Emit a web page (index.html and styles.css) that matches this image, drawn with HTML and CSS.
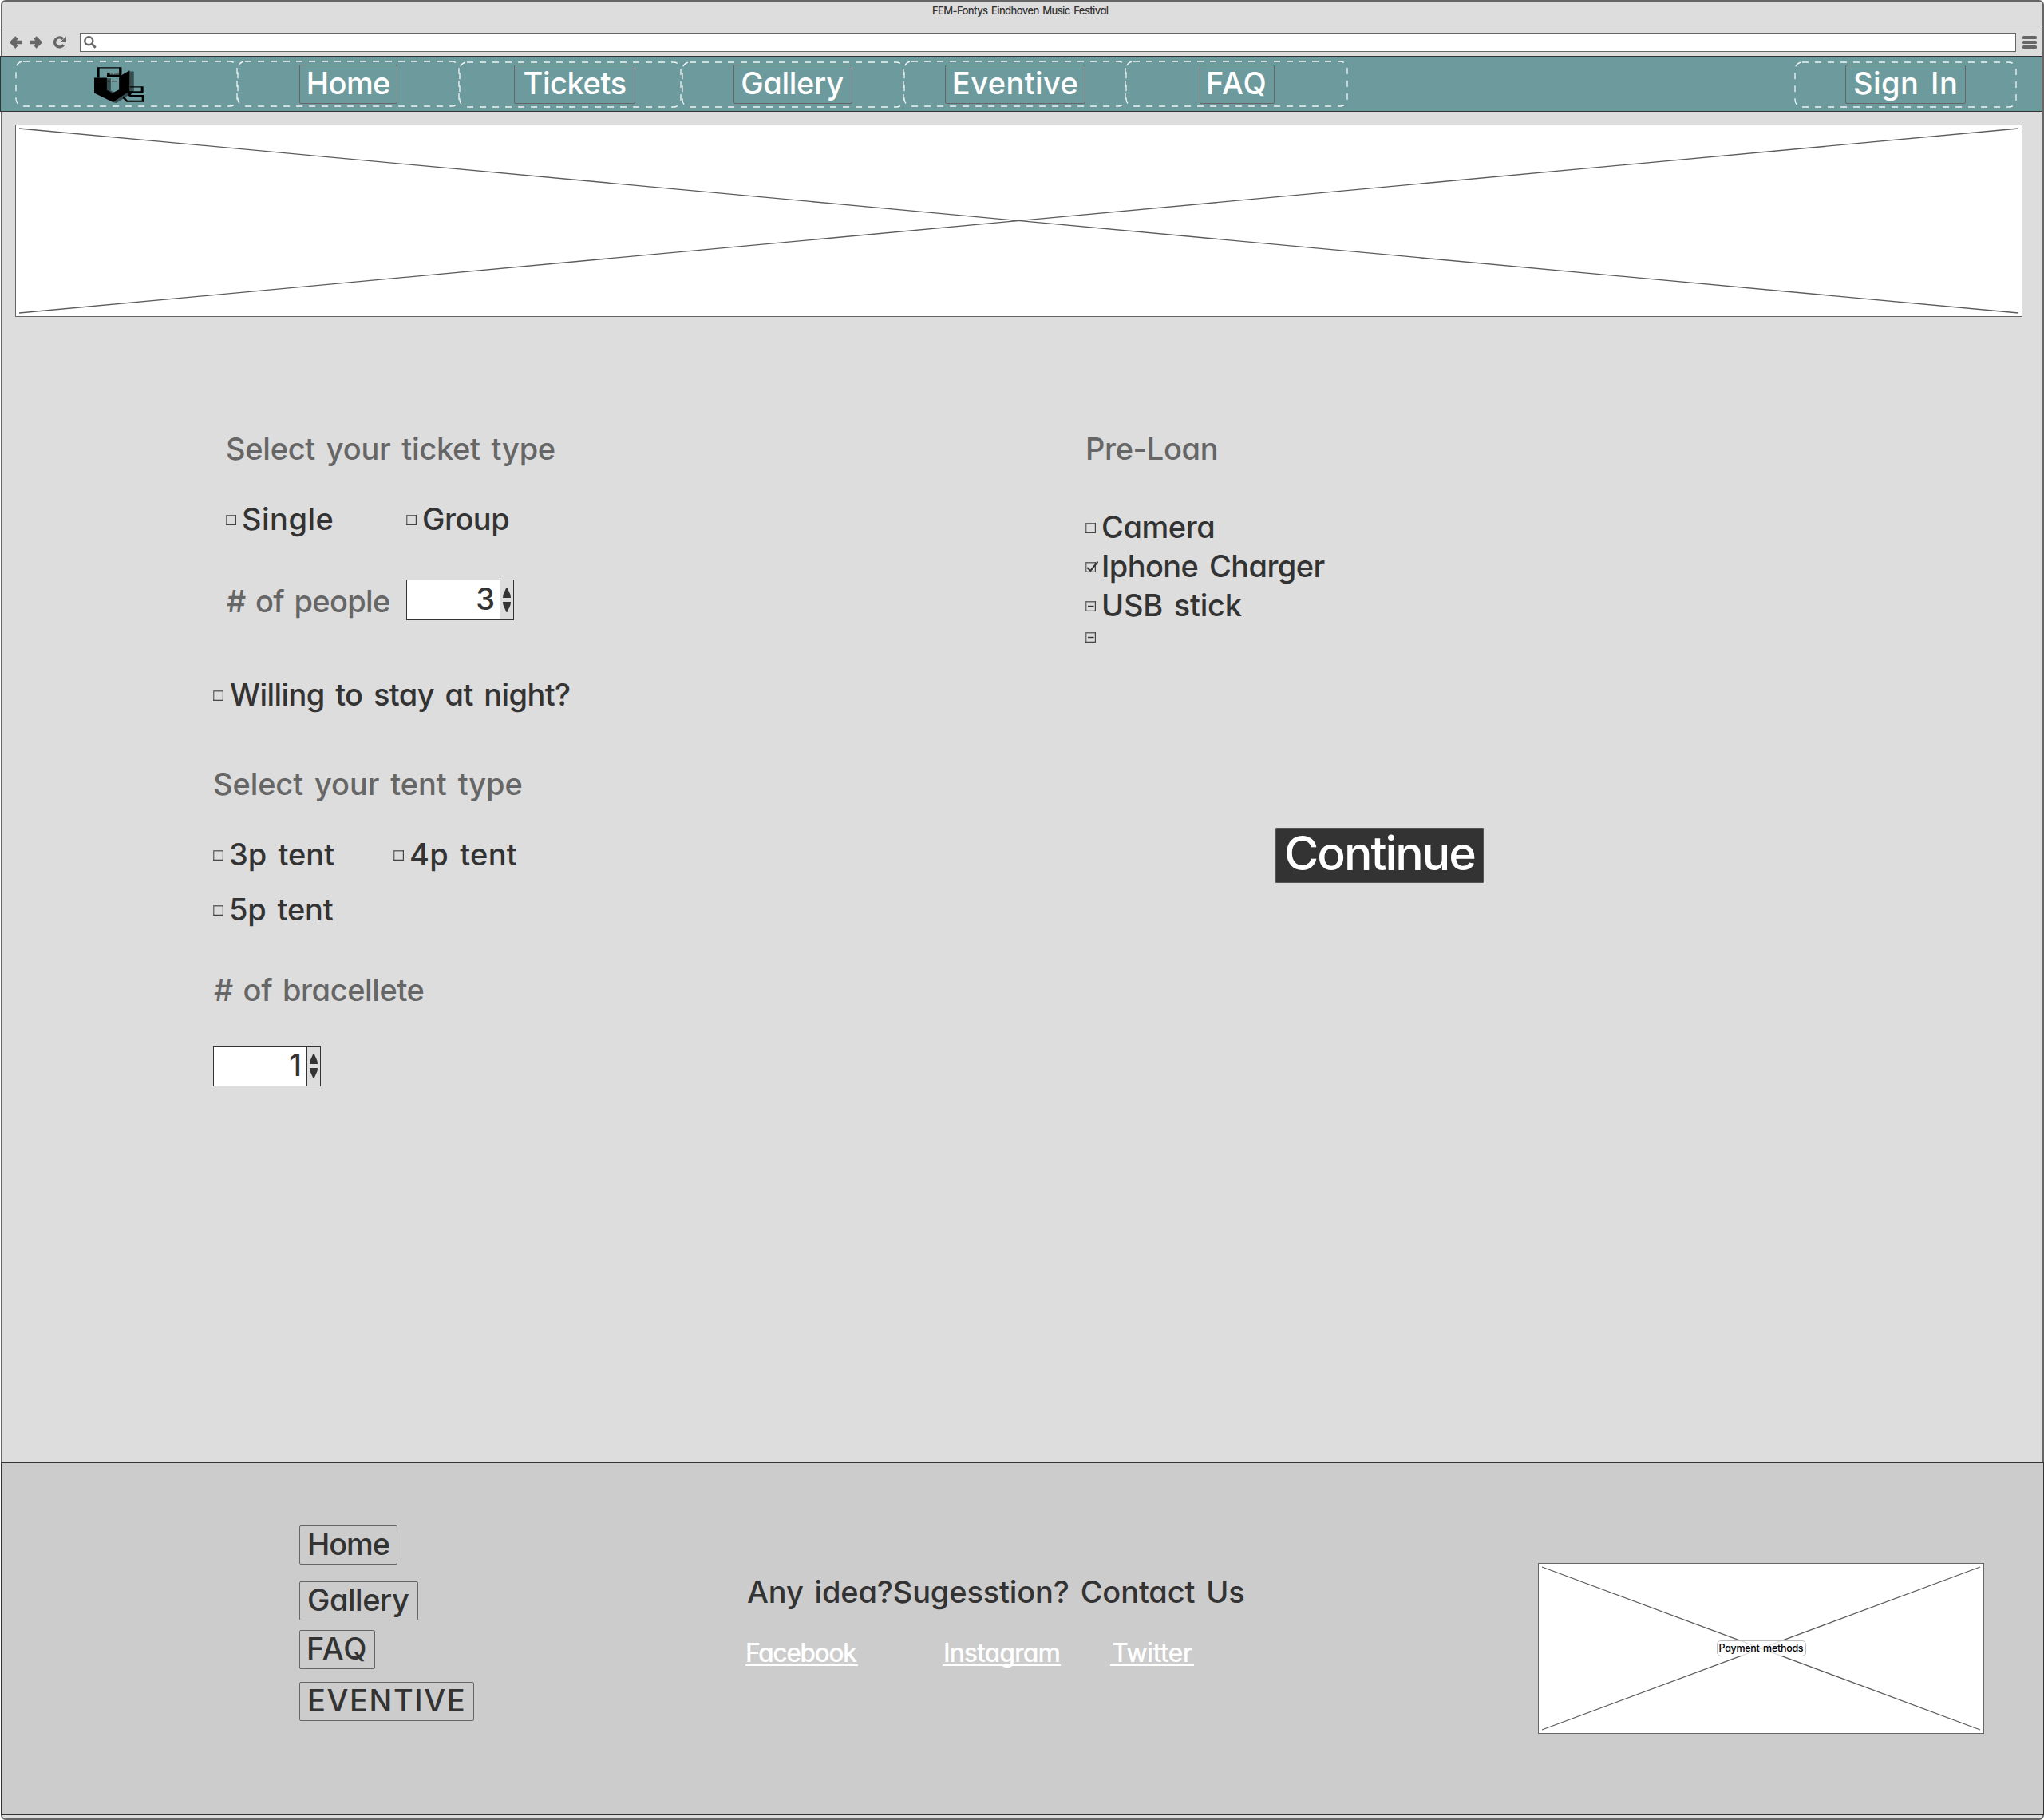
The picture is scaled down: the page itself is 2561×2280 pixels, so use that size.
FILE: index.html
```html
<!DOCTYPE html>
<html lang="en">
<head>
<meta charset="utf-8">
<title>FEM-Fontys Eindhoven Music Festival</title>
<link rel="stylesheet" href="styles.css">
</head>
<body>
<svg class="defs" width="0" height="0">
  <symbol id="slot" viewBox="0 0 279 58"><rect x="1" y="1" width="277" height="56" rx="9"/></symbol>
  <symbol id="box" viewBox="0 0 13 13">
    <path d="M.75 13V.75H12" fill="none" stroke="#666" stroke-width="1.3"/>
    <path d="M12.4 0V12.4H0" fill="none" stroke="#444" stroke-width="1.2"/>
  </symbol>
  <symbol id="spin" viewBox="0 0 16 49">
    <path d="M7.500 9h1l4 9 .5 4H3l.5-4zM3 27h10l-.5 4-4 9h-1l-4-9z" fill="#333"/>
  </symbol>
</svg>
<div class="window">
  <div class="titlebar"><span class="title">FEM-Fontys Eindhoven Music Festival</span></div>
  <div class="toolbar">
    <svg class="ico back" viewBox="0 0 16 16"><path d="M9 2 3 8l6 6M3.500 8H15.500" /></svg>
    <svg class="ico fwd" viewBox="0 0 16 16"><path d="M7 2l6 6-6 6M12.500 8H.5" /></svg>
    <svg class="ico reload" viewBox="0 0 16 16"><path d="M12.600 11.200A6 6 0 1 1 12 3.800"/><path class="solid" d="M16 .5V8H8.500z"/></svg>
    <div class="url"><svg class="search" viewBox="0 0 16 16"><circle cx="6.300" cy="6.300" r="5"/><path d="M10 10l4.700 4.700"/></svg></div>
    <svg class="menu" viewBox="0 0 18 16"><rect width="18" height="4" rx="1.500"/><rect y="6" width="18" height="4" rx="1.500"/><rect y="12" width="18" height="4" rx="1.500"/></svg>
  </div>

  <nav class="nav">
    <div class="slot">
      <svg class="dash"><use href="#slot"/></svg>
      <svg class="logo" viewBox="54 42 190 134">
        <path fill="#000" fill-opacity=".5" d="M102 84h15v46l12 6-6 8-21-14zM188 58h16v76l-66 43-14-3 64-42z"/>
        <path d="M54 82h48v46l21 11 25-13V80l10-9 30-17v78l-63 42-71-35z"/>
        <path d="M66 42h92v28h-10V46H74v36h-8zM103 63h10v7h43v7h-54zM116 63h9v3h-9zM130 63h18v3h-18zM102 93h14v3h-14zM120 93h22v3h-22z"/>
        <path d="M190 114h50v24h-42l-6 9h50v26h-66l-15-16 6-4 13 14h54v-14h-46l-8-6v-15h51v-14h-41z"/>
      </svg>
    </div>
    <div class="slot"><svg class="dash"><use href="#slot"/></svg><a class="link home">Home</a></div>
    <div class="slot low"><svg class="dash"><use href="#slot"/></svg><a class="link tickets">Tickets</a></div>
    <div class="slot low"><svg class="dash"><use href="#slot"/></svg><a class="link gallery">Gallery</a></div>
    <div class="slot"><svg class="dash"><use href="#slot"/></svg><a class="link eventive">Eventive</a></div>
    <div class="slot"><svg class="dash"><use href="#slot"/></svg><a class="link faq">FAQ</a></div>
    <div class="slot low signin"><svg class="dash"><use href="#slot"/></svg><a class="link sign">Sign In</a></div>
  </nav>

  <main class="main">
    <svg class="banner" viewBox="0 0 2515 241"><rect x=".5" y=".5" width="2514" height="240"/><path d="M5 5 2510 236M5 236 2510 5"/></svg>
    <div class="columns">
      <section class="tickets-form">
        <h2 class="heading ticket-heading">Select your ticket type</h2>
        <div class="row ticket-row">
          <label class="option"><svg class="check"><use href="#box"/></svg><span class="t-single">Single</span></label>
          <label class="option"><svg class="check"><use href="#box"/></svg><span class="t-group">Group</span></label>
        </div>
        <div class="row people-row">
          <span class="people-label"># of people</span>
          <div class="stepper"><span class="value">3</span><svg class="arrows"><use href="#spin"/></svg></div>
        </div>
        <div class="row night-row">
          <label class="option"><svg class="check"><use href="#box"/></svg><span class="t-night">Willing to stay at night?</span></label>
        </div>
        <h2 class="heading tent-heading">Select your tent type</h2>
        <div class="row tent-row">
          <label class="option"><svg class="check"><use href="#box"/></svg><span class="t-3p">3p tent</span></label>
          <label class="option"><svg class="check"><use href="#box"/></svg><span class="t-4p">4p tent</span></label>
        </div>
        <div class="row tent-row2">
          <label class="option"><svg class="check"><use href="#box"/></svg><span class="t-5p">5p tent</span></label>
        </div>
        <h2 class="heading bracelet-heading"># of bracellete</h2>
        <div class="stepper bracelet"><span class="value">1</span><svg class="arrows"><use href="#spin"/></svg></div>
      </section>
      <section class="loan-form">
        <h2 class="heading loan-heading">Pre-Loan</h2>
        <div class="loans">
          <label class="option"><svg class="check"><use href="#box"/></svg><span class="t-camera">Camera</span></label>
          <label class="option"><svg class="check"><use href="#box"/><path class="mark" d="M2.700 7.500 6.300 11 15 .3"/></svg><span class="t-iphone">Iphone Charger</span></label>
          <label class="option"><svg class="check"><use href="#box"/><path class="minus" d="M3 6.500H10.500"/></svg><span class="t-usb">USB stick</span></label>
          <label class="option empty"><svg class="check"><use href="#box"/><path class="minus" d="M3 6.500H10.500"/></svg></label>
        </div>
        <button class="continue">Continue</button>
      </section>
    </div>
  </main>

  <footer class="footer">
    <div class="foot-links">
      <a class="link f-home">Home</a>
      <a class="link f-gallery">Gallery</a>
      <a class="link f-faq">FAQ</a>
      <a class="link f-eventive">EVENTIVE</a>
    </div>
    <div class="contact">
      <p class="ask">Any idea?Sugesstion? Contact Us</p>
      <div class="social"><a class="facebook">Facebook</a><a class="instagram">Instagram</a><a class="twitter">Twitter</a></div>
    </div>
    <div class="payment">
      <svg class="cross" viewBox="0 0 559 214"><rect x=".5" y=".5" width="558" height="213"/><path d="M5 5 554 209M5 209 554 5"/></svg>
      <span class="caption">Payment methods</span>
    </div>
  </footer>
</div>
</body>
</html>
```
FILE: styles.css
```css
* { box-sizing: border-box; }

body {
  margin: 0;
  background: #fff;
  color: #333;
  font-family: Inter, "Open Sans", sans-serif;
  font-size: 38px;
  font-weight: 500;
  font-feature-settings: "cv11";
  line-height: 48px;
  word-spacing: 4px;
  white-space: nowrap;
}

svg { display: block; flex: none; }
.defs { position: absolute; }

.window {
  width: 2560px;
  height: 2280px;
  margin-left: 1px;
  border: 2px solid #666;
  border-radius: 6px;
  background: #ddd;
  display: flex;
  flex-direction: column;
}

/* Browser chrome */
.titlebar {
  height: 31px;
  border-bottom: 1px solid #666;
  padding-left: 1165px;
  font-size: 13px;
  line-height: 22px;
  letter-spacing: -.6px;
  word-spacing: 1.7px;
}
.toolbar {
  height: 37px;
  display: flex;
  align-items: flex-start;
  padding: 8px 0 0 9px;
}
.ico { width: 16px; height: 16px; margin-top: 4px; fill: none; stroke: #666; stroke-width: 4.6; }
.ico .solid { fill: #666; stroke: none; }
.fwd { margin-left: 9px; }
.reload { margin-left: 14px; stroke-width: 3.4; }
.url {
  width: 2426px;
  height: 24px;
  margin-left: 17px;
  border: 1px solid #666;
  background: #fff;
  padding: 3px 4px;
}
.search { width: 16px; height: 16px; fill: none; stroke: #666; stroke-width: 2.4; }
.search path { stroke-width: 3; }
.menu { width: 18px; height: 16px; margin: 4px 0 0 8px; fill: #666; }

/* Navigation */
.nav {
  width: 2559px;
  height: 70px;
  flex: none;
  margin-left: -3px;
  border: 1px solid #333;
  background: #6d9a9d;
  color: #fff;
  display: flex;
  padding: 5px 0 0 18px;
  position: relative;
}
.slot {
  width: 278.2px;
  height: 58px;
  display: flex;
  justify-content: center;
  padding-top: 5px;
  position: relative;
}
.dash {
  position: absolute;
  left: 0;
  top: -.5px;
  width: 279px;
  height: 58px;
  fill: none;
  stroke: #f2f5f5;
  stroke-width: 1.3;
  stroke-dasharray: 8 8;
}
.low .dash { top: .5px; }
.signin { margin-left: auto; margin-right: 32px; }
.logo { width: 63px; height: 45px; margin: 3px 17px 0 0; }

.link {
  display: block;
  height: 49px;
  border: 1px solid #666;
  border-radius: 2px;
  line-height: 44px;
  padding-left: 8px;
}
.home { width: 123px; letter-spacing: -.57px; }
.tickets { width: 152px; margin-left: 12px; padding-left: 10px; letter-spacing: -.4px; }
.gallery { width: 149px; margin-left: 2px; letter-spacing: -.28px; }
.eventive { width: 176px; margin-left: 2px; letter-spacing: .42px; }
.faq { width: 94px; margin-left: 2px; padding-left: 7px; letter-spacing: 1px; }
.sign { width: 151px; margin-left: 1px; padding-left: 9px; letter-spacing: .5px; }

/* Main */
.main { height: 1692px; flex: none; padding: 16px 0 0 16px; }
.banner { width: 2515px; height: 241px; }
.banner, .cross { fill: #fff; stroke: #666; stroke-width: 1; }
.banner path, .cross path { stroke-width: 1.3; stroke: #5c5c5c; }
.columns { display: grid; grid-template-columns: 1093px 1fr; padding: 141px 0 0 248px; }

.heading { margin: 0; font-size: 38px; font-weight: 500; line-height: 48px; color: #666; }
.ticket-heading { padding-left: 16px; letter-spacing: -.27px; }
.row { display: flex; height: 48px; }
.option { display: flex; width: 226px; height: 48px; }
.check { width: 13px; height: 13px; margin: 19px 7px 0 0; overflow: visible; fill: none; stroke: #333; }
.mark { stroke-width: 2; stroke-linecap: round; }
.minus { stroke-width: 1.4; }
.ticket-row { margin-top: 40px; padding-left: 16px; }
.t-single { letter-spacing: .5px; }
.t-group { letter-spacing: -.5px; }
.people-row { margin-top: 52px; height: 52px; padding-left: 17px; }
.people-label { width: 225px; line-height: 54px; color: #666; letter-spacing: -.68px; word-spacing: 3px; }
.stepper {
  width: 135px;
  height: 51px;
  border: 1px solid #333;
  background: #ddd;
  display: flex;
}
.value {
  width: 117px;
  background: #fff;
  border-right: 1px solid #333;
  padding-right: 6px;
  text-align: right;
  line-height: 46px;
}
.arrows { width: 16px; height: 49px; }
.night-row { margin-top: 68px; }
.t-night { margin-left: 1px; letter-spacing: -.6px; }
.tent-heading { margin-top: 64px; letter-spacing: -.1px; }
.tent-row { margin-top: 40px; }
.tent-row2 { margin-top: 21px; }
.t-3p { letter-spacing: 0; }
.t-4p { letter-spacing: .25px; }
.t-5p { letter-spacing: -.18px; }
.bracelet-heading { margin-top: 53px; padding-left: 1px; letter-spacing: -.4px; word-spacing: 3px; }
.bracelet { margin-top: 46px; }

.loan-heading { letter-spacing: -.35px; }
.loans { margin-top: 50px; }
.loans .option { height: 49px; }
.loans .empty { height: 31px; }
.empty .check { margin-top: 9px; }
.t-camera { letter-spacing: -.45px; }
.t-iphone { letter-spacing: -.58px; }
.t-usb { letter-spacing: -.25px; }
.continue {
  display: block;
  width: 261px;
  height: 69px;
  margin: 223px 0 0 238px;
  padding: 0 0 5px 10px;
  border: 1px solid #555;
  border-radius: 1px;
  background: #333;
  color: #fff;
  font: 500 59px/62px Inter, "Open Sans", sans-serif;
  letter-spacing: -2px;
  text-align: left;
}

/* Footer */
.footer {
  width: 2560px;
  height: 442px;
  flex: none;
  margin-left: -2px;
  border: 1px solid #333;
  background: #ccc;
  display: flex;
  align-items: flex-start;
  padding-left: 373px;
  position: relative;
}
.foot-links { width: 559px; padding-top: 78px; }
.f-home { width: 123px; padding-left: 9px; letter-spacing: -1.1px; }
.f-gallery { width: 149px; margin-top: 21px; padding-left: 9px; letter-spacing: -.45px; }
.f-faq { width: 95px; margin-top: 12px; letter-spacing: .85px; }
.f-eventive { width: 219px; margin-top: 16px; padding-left: 9px; letter-spacing: 1.6px; }
.contact { width: 993px; padding-top: 137px; }
.ask { margin: 0; padding-left: 2px; letter-spacing: -.15px; }
.social { display: flex; margin-top: 38px; color: #fff; font-size: 32px; line-height: 29px; }
.social a { height: 31px; border-bottom: 2px solid #fff; }
.facebook { width: 141px; letter-spacing: -1.6px; }
.instagram { width: 148px; margin-left: 106px; padding-left: 1px; letter-spacing: -1.05px; }
.twitter { width: 105px; margin-left: 62px; padding-left: 2px; letter-spacing: -.7px; }
.payment {
  margin-top: 125px;
  width: 559px;
  height: 214px;
  display: grid;
  place-items: center;
}
.cross, .caption { grid-area: 1 / 1; }
.cross { width: 559px; height: 214px; }
.caption {
  width: 112px;
  height: 20px;
  border: 1px solid #bbb;
  border-radius: 5px;
  background: rgba(255, 255, 255, .8);
  color: #000;
  font-size: 12.5px;
  line-height: 18px;
  padding-left: 2px;
  letter-spacing: -.3px;
  word-spacing: 1.6px;
  z-index: 1;
}
```
